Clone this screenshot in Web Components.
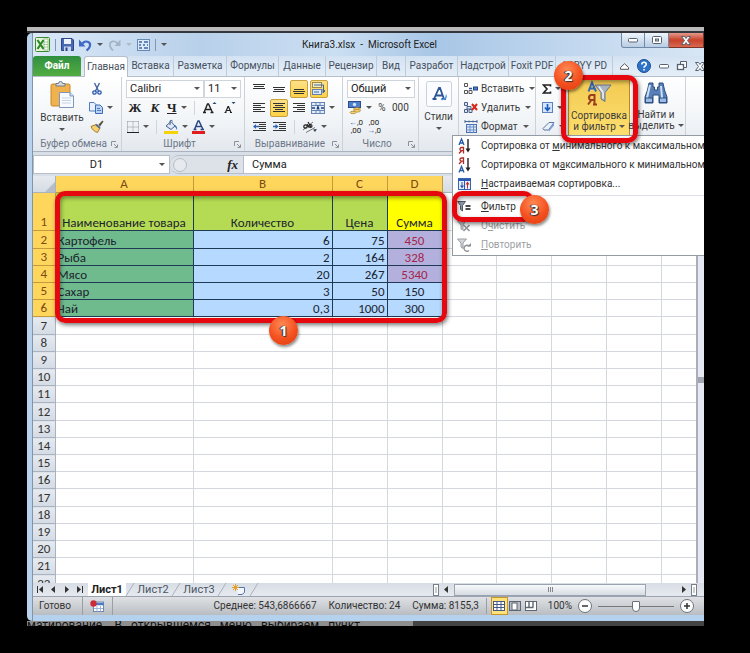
<!DOCTYPE html>
<html lang="ru">
<head>
<meta charset="utf-8">
<title>Книга3.xlsx - Microsoft Excel</title>
<style>
html,body{margin:0;height:100%;background:#000}
body{font-family:Roboto,"Open Sans",sans-serif;font-size:10px;line-height:14px;color:#3b3b3b}
</style>
</head>
<body>
<excel-page></excel-page>
<script>
const base = `:host,*{box-sizing:border-box}button,select,input{font:inherit;color:inherit;margin:0;padding:0;border:0;background:none;outline:0}button{cursor:pointer}svg{display:block;overflow:visible}`;
function define(name, css, html, setup){
  const t = document.createElement('template');
  customElements.define(name, class extends HTMLElement{
    constructor(){ super(); this.attachShadow({mode:'open'}); }
    connectedCallback(){
      if(this.shadowRoot.childNodes.length) return;
      t.innerHTML = `<style>${base}${css}</style>` + (typeof html==='function' ? html(this) : html);
      this.shadowRoot.append(t.content.cloneNode(true));
      if(setup) setup(this);
    }
  });
}

const lines = (rows, y0, step=2) => rows.map((r,i)=>`<path d="M${r[0]} ${y0+i*step}.5H${r[1]}" stroke="#333"/>`).join('');
const icons = {
 excel:[15,15,`<rect x=".5" y=".5" width="14" height="14" rx="1" fill="#e9f5dd" stroke="#3c8a2e"/><rect x="9" y="2" width="4" height="11" fill="#fff" stroke="#7bb46b" stroke-width=".7"/><path d="M9 5h4M9 7.500h4M9 10h4" stroke="#7bb46b" stroke-width=".7"/><path d="M2.500 3l6 9M8.500 3l-6 9" stroke="#2e8b2b" stroke-width="2.200"/>`],
 save:[13,13,`<path d="M.5.5h10.500l1.500 1.500v10.500H.5z" fill="#4a68b4" stroke="#2d4686"/><path d="M3 1h7v5H3z" fill="#eef3fb"/><path d="M3 8.500h7V13H3z" fill="#c9d6ee"/><path d="M4.500 9.500h2V13h-2z" fill="#2d4686"/>`],
 undo:[13,12,`<path d="M3.500 4.500C6 1 12 2.500 11 7 10.500 9 9 10.500 7.500 11.500" fill="none" stroke="#3e69c4" stroke-width="2.200"/><path d="M0 .5v7h6.500z" fill="#3e69c4"/>`],
 redo:[13,12,`<path d="M9.500 4.500C7.500 1 1 1.500 2 7c.4 2 2 3.500 3 4.500" fill="none" stroke="#a6b3c6" stroke-width="1.700"/><path d="M12.500 .5v6.500H6.500z" fill="#a6b3c6"/>`],
 gridq:[13,12,`<rect x=".5" y=".5" width="12" height="11" fill="#dbe9f9" stroke="#6988b4"/><path d="M2 3h3M7 3h4M2 6h2M6 6h2M10 6h1M2 9h3M7 9h4" stroke="#3d68a8" stroke-width="1.300"/>`],
 paste:[25,27,`<rect x="1" y="3" width="19" height="22" rx="1.500" fill="#efb24e" stroke="#c5872b"/><path d="M6 5V2.500h2.500a2 2 0 0 1 4 0H15V5z" fill="#d8dce2" stroke="#707a88"/><path d="M9.500 11.500H20l3.500 3.500v11.500h-14z" fill="#f6f9fd" stroke="#7f97bd"/><path d="M20 11.500V15h3.500" fill="#cddbf0" stroke="#7f97bd"/><path d="M12 17h9M12 19.500h9M12 22h9" stroke="#c7d4e7"/>`],
 cut:[10,12,`<path d="M2.500 0l4 8M7.500 0l-4 8" stroke="#41669f" stroke-width="1.400"/><circle cx="2.500" cy="9.500" r="1.700" fill="none" stroke="#2554b0" stroke-width="1.300"/><circle cx="7.500" cy="9.500" r="1.700" fill="none" stroke="#2554b0" stroke-width="1.300"/>`],
 copy:[14,12,`<path d="M.5.5h4.500l2 2v6.500H.5z" fill="#e8f0fb" stroke="#4f7ec4"/><path d="M6.500 3h4.500l2.500 2.500v6h-7z" fill="#bcd3f3" stroke="#3b6cb7"/><path d="M8 6.500h3M8 8.500h4" stroke="#4a79c0"/>`],
 brush:[14,13,`<path d="M8.500 4.500L12.500.5l1 1-3.500 5z" fill="#5a4b3b"/><path d="M1 6.500l5-2 4 3.500-2.500 4.500C5 12 2 9.500 1 6.500z" fill="#f5d071" stroke="#a67b25"/><path d="M6 4.500l4 3.500" stroke="#5b6c88" stroke-width="2"/>`],
 borders:[12,12,`<path d="M.5.5h11M.5 6h11M.5.5v11M6 .5v11M11.500.5v11" stroke="#8a939f" stroke-dasharray="1 1"/><path d="M0 11.500h12" stroke="#222"/>`],
 fill:[14,14,`<path d="M2 6l5-4.500 4 4.500-4 3.500z" fill="#dfe8f4" stroke="#41608f"/><path d="M6 5V1.500a1.200 1.200 0 0 1 2.400 0" fill="none" stroke="#41608f"/><path d="M11 5c2 1 2.500 3 2 5-1-1-1-3-2.500-3z" fill="#3c74c9"/><rect y="11" width="14" height="3" fill="#f5d20a"/>`],
 fcolor:[13,14,`<path d="M2.500 9.500L6 1h1l4 8.500M4.200 6.500h4.600M1.500 9.500h3M8.500 9.500h3.500" fill="none" stroke="#2a4a84" stroke-width="1.500"/><rect y="11" width="13" height="3" fill="#e21d1d"/>`],
 grow:[13,13,`<path d="M1 11.500L4.500 3h1L9.500 11.500M2.500 8.500h5M0 11.500h3M7.500 11.500h3" fill="none" stroke="#222" stroke-width="1.400"/><path d="M9.500 3l2-2 2 2z" fill="#27426f"/>`],
 shrink:[11,13,`<path d="M1.500 11.500L4 5.500h.5L7 11.500M2.500 9.500h3.500M.5 11.500h2M6 11.500h2" fill="none" stroke="#222" stroke-width="1.200"/><path d="M7.500 1l2 2 2-2z" fill="#27426f"/>`],
 atop:[12,12,lines([[0,12],[1,11],[0,12]],1)], amid:[12,12,lines([[0,12],[1,11],[0,12]],4)], abot:[12,12,lines([[1,11],[0,12],[1,11]],6)],
 aleft:[12,12,lines([[0,12],[0,8],[0,12],[0,8],[0,12]],1)], acen:[12,12,lines([[0,12],[2,10],[0,12],[2,10],[0,12]],1)], aright:[12,12,lines([[0,12],[4,12],[0,12],[4,12],[0,12]],1)],
 wrap:[14,14,`<rect x=".5" y=".5" width="9" height="5" fill="#f5edc0" stroke="#9a8a50"/><path d="M2 3h9.500v6" fill="none" stroke="#3d67a8"/><rect x=".5" y="7.500" width="9" height="5" fill="#dbe8fa" stroke="#6480b0"/><path d="M2 10h5M13 9l-2 2V7z" stroke="#3d67a8" fill="#3d67a8"/>`],
 merge:[14,12,`<rect x=".5" y=".5" width="13" height="11" fill="#e3edfa" stroke="#6583b3"/><path d="M5 .5v3M9 .5v3M5 8.500v3M9 8.500v3M.5 3.500h13M.5 8.500h13" stroke="#6583b3"/><path d="M1 6h3M10 6h3M6 7.500L7 4.500 8 7.500" fill="none" stroke="#1f3f7d" stroke-width="1.300"/>`],
 outd:[13,11,lines([[0,13],[6,13],[6,13],[6,13],[0,13]],1)+`<path d="M0 5.500l3-2.500v5z" fill="#2c62b8"/><path d="M2 5.500h4" stroke="#2c62b8" stroke-width="1.500"/>`],
 ind:[13,11,lines([[0,13],[6,13],[6,13],[6,13],[0,13]],1)+`<path d="M5.500 5.500l-3-2.500v5z" fill="#2c62b8"/><path d="M0 5.500h4" stroke="#2c62b8" stroke-width="1.500"/>`],
 orient:[15,12,`<path d="M1 9l10-8M4 11.500l9-5" stroke="#777"/><circle cx="3.500" cy="5.500" r="1.700" fill="none" stroke="#222" stroke-width="1.200"/><path d="M5 3l2 3.500M6 1l3 5" stroke="#222" stroke-width="1.200"/><circle cx="8.500" cy="5" r="1.500" fill="none" stroke="#222" stroke-width="1.200"/><path d="M11 8.500l4-.5-2 3z" fill="#345"/>`],
 money:[14,13,`<rect x=".5" y=".5" width="12" height="6" fill="#4e7fc8" stroke="#274d8f"/><circle cx="6.500" cy="3.500" r="1.700" fill="#d4e3f8"/><ellipse cx="9" cy="8" rx="3.500" ry="1.300" fill="#f7d574" stroke="#a8812b" stroke-width=".7"/><ellipse cx="9" cy="9.800" rx="3.500" ry="1.300" fill="#f7d574" stroke="#a8812b" stroke-width=".7"/><ellipse cx="5" cy="11.500" rx="3" ry="1.200" fill="#f7d574" stroke="#a8812b" stroke-width=".7"/>`],
 styles:[26,26,`<rect x=".5" y=".5" width="25" height="25" rx="2" fill="#fafcff" stroke="#c9d1dc"/><path d="M8 18l5-11h1l4 11M10 14.500h6.500M6.500 18h4M15.500 18h4.500" fill="none" stroke="#2c5595" stroke-width="1.800"/><path d="M14 19l5-2 1-4c2 3 1 7-6 6z" fill="#5599e0"/>`],
 insert:[14,12,`<path d="M.5.5h3v3h-3zM.5 7.500h3v3h-3zM5 7.500h3v3H5z" fill="#fff" stroke="#555"/><path d="M5 5.500h3" stroke="#2554a5" stroke-width="1.600"/><rect x="9.500" y="4" width="4" height="3" fill="#4b7bc9" stroke="#26488a"/>`],
 del:[14,12,`<path d="M.5.5h3v3h-3zM.5 7.500h3v3h-3zM5 7.500h3v3H5zM3 4.500h4v2.500H3z" fill="#dbe6f7" stroke="#4a5f85"/><path d="M8 2l5 6M13 2L8 8" stroke="#d9261c" stroke-width="2"/>`],
 format:[14,13,`<path d="M1 1.500h12M1 0v3M13 0v3M5 .5v2M9 .5v2" stroke="#4b6799"/><rect x="2.500" y="4.500" width="10" height="8" fill="#dbe7f9" stroke="#4b6fae"/><path d="M2.500 7h10M2.500 10h10M6 4.500v8M9.500 4.500v8" stroke="#6f91c9"/>`],
 fdown:[11,11,`<rect x=".5" y=".5" width="10" height="10" fill="#d6e5f9" stroke="#5b82bd"/><path d="M5.500 2v5M3 5.500l2.500 3 2.500-3" fill="none" stroke="#1c5cc0" stroke-width="1.700"/>`],
 erase:[13,11,`<path d="M1 7.500L7 1.500h5L6.500 9H2z" fill="#eaf1fa" stroke="#5d76a1"/><path d="M6.500 9l5.500-7.500v3L7 10.500" fill="#7ba1da"/>`],
 sort:[25,25,`<path d="M1.500 10.500L5 1.500l4 9M2.500 7.500h5" fill="none" stroke="#3365b4" stroke-width="2"/><path d="M7.500 23V14H4.500a2.500 2.500 0 0 0 0 5H7.500M4.500 19L1 23.500M6 23.500h4" fill="none" stroke="#9a3e1d" stroke-width="2"/><path d="M8 4h16l-6 7.500v9l-4-2.500v-6.500z" fill="#aab3c0" stroke="#69758a"/><path d="M12 5.500l4 6v6" fill="none" stroke="#eef2f7" stroke-width="1.500"/>`],
 find:[24,24,`<path d="M5 2h4v4h1.500v3h3V6H15V2h4l1.500 7L23 16v6h-8v-8H9v8H1v-6l2.500-7z" fill="#577fb8" stroke="#2f517f"/><path d="M6 4L3 17M17 5l1 12" stroke="#cfe0f6" stroke-width="2"/><rect x="1.500" y="17" width="7" height="4.500" fill="#9bbce8" stroke="#2f517f"/><rect x="15.500" y="17" width="7" height="4.500" fill="#9bbce8" stroke="#2f517f"/>`],
 sortaz:[13,16,`<path d="M1 7L3.500 1 6 7M1.500 5h4" fill="none" stroke="#2459a8" stroke-width="1.300"/><path d="M5.500 15.500V9.500h-2a1.500 1.500 0 0 0 0 3.200h2M3.500 12.700L1 15.500" fill="none" stroke="#b02c26" stroke-width="1.300"/><path d="M10 1v11" stroke="#222" stroke-width="1.400"/><path d="M7.500 10.500h5L10 14.500z" fill="#222"/>`],
 sortza:[13,16,`<path d="M5.500 7V1h-2a1.500 1.500 0 0 0 0 3.200h2M3.500 4.200L1 7" fill="none" stroke="#b02c26" stroke-width="1.300"/><path d="M1 15.500L3.500 9.500 6 15.500M1.500 13.500h4" fill="none" stroke="#2459a8" stroke-width="1.300"/><path d="M10 1v11" stroke="#222" stroke-width="1.400"/><path d="M7.500 10.500h5L10 14.500z" fill="#222"/>`],
 custom:[13,12,`<rect x=".5" y=".5" width="12" height="11" fill="#e6effc" stroke="#3866b2"/><path d="M.5 2h12" stroke="#2858b0" stroke-width="2"/><path d="M4 4v5M6.500 3v9" stroke="#2858b0"/><path d="M2 7.500h4L4 10.500z" fill="#2858b0"/><path d="M9.500 6v4.500" stroke="#c22c22"/><path d="M7.500 6.500h4l-2-3z" fill="#c22c22"/>`],
 filter:[14,11,`<path d="M.5.500h8L5.500 4.500V10l-2-1.500v-4z" fill="#8e99a8" stroke="#4d5866"/><path d="M8.500 5h5M8.500 8h5" stroke="#111" stroke-width="1.700"/>`],
 clear:[14,12,`<path d="M.5 1h8L6 5v5L4 9V5z" fill="#c4c7cb" stroke="#9b9fa5"/><path d="M6.500 5l6 6M12.500 5l-6 6" stroke="#8f9399" stroke-width="1.600"/>`],
 again:[14,14,`<path d="M.5 1h9L6 5v5.500l-2-1.500V5z" fill="#d3d6da" stroke="#9b9fa5"/><path d="M12.500 8.500A3 3 0 1 0 12 12.500" fill="none" stroke="#8f9399" stroke-width="1.400"/><path d="M10 8.500h4V5z" fill="#8f9399"/>`],
 macro:[14,12,`<rect x="3.500" y="2" width="10" height="9.500" fill="#fff" stroke="#6b88b5"/><path d="M3.500 4h10" stroke="#4b78c4" stroke-width="2.500"/><path d="M7 6v5.500M10.500 6v5.500M4 8.500h9" stroke="#9db4d6"/><circle cx="3.500" cy="3.500" r="3.200" fill="#cc2c35"/>`],
 newtab:[14,11,`<path d="M4.500 3.500h8v5l-2.500 2H6" fill="#f3f7fd" stroke="#5474ac"/><path d="M3.500 0v7M0 3.500h7M1 1l5 5M6 1L1 6" stroke="#e0a02b"/>`],
 slash:[8,13,`<path d="M0 13L8 0" stroke="#a9b1bc"/>`],
 vnormal:[12,10,`<rect x=".5" y=".5" width="11" height="9" fill="#fff" stroke="#445b86"/><path d="M.5 3.500h11M.5 6.500h11M4 .5v9M8 .5v9" stroke="#445b86"/>`],
 vlayout:[12,10,`<rect x=".5" y=".5" width="11" height="9" fill="#b9bec6" stroke="#5d6672"/><rect x="3" y="2" width="5" height="7" fill="#fff" stroke="#5d6672"/>`],
 vbreak:[12,10,`<rect x=".5" y=".5" width="11" height="9" fill="#fff" stroke="#5d6672"/><path d="M4 .5v6M8 .5v6M.5 6.500h8" stroke="#5d6672" stroke-width="1.400"/>`],
 help:[14,14,`<circle cx="7" cy="7" r="6.500" fill="#2d74c8" stroke="#1d4f96"/><path d="M4.800 5.500C4.800 2.500 9.500 2.700 9.300 5.300 9.200 6.800 7 7 7 8.800M7 10v1.600" fill="none" stroke="#fff" stroke-width="1.600"/>`],
 up:[9,7,`<path d="M.5 4.500L4.500.7l4 3.800v1.800h-8z" fill="#fff" stroke="#555"/>`],
 mini:[10,5,`<rect x=".5" y=".5" width="9" height="3.500" rx="1" fill="#fff" stroke="#566270"/>`],
 rest:[10,10,`<path d="M3.500 3V.5h6v6H7" fill="#fff" stroke="#566270"/><rect x=".5" y="3.500" width="6" height="5" fill="#fff" stroke="#566270" stroke-width="1.300"/>`],
 x:[10,9,`<path d="M.5.5h3L5 2.500 6.500.5h3L6.500 4.500l3 4h-3L5 6.500 3.500 8.500h-3L3.500 4.500z" fill="#fff" stroke="#566270"/>`],
 max:[10,8,`<rect x=".5" y=".5" width="9" height="7" rx="1" fill="#fff" stroke="#566270"/><rect x="3.500" y="3" width="3" height="2" fill="#b9c7d8" stroke="#566270"/>`],
 launch:[7,7,`<path d="M.5 5V.5H5M3 3l3 3M6.500 3.500v3h-3" fill="none" stroke="#8b929b"/>`],
 sigma:[9,10,`<path d="M8.500 2.500V1H1.500l3.500 4-3.500 4h7V7.500" fill="none" stroke="#222" stroke-width="1.600"/>`],
 first:[7,7,`<path d="M.5 0v7" stroke="#333"/><path d="M6 0v7L2 3.500z" fill="#333"/>`],
 prev:[7,7,`<path d="M5 0v7L1 3.500z" fill="#333"/>`],
 next:[7,7,`<path d="M2 0v7l4-3.500z" fill="#333"/>`],
 last:[7,7,`<path d="M6.500 0v7" stroke="#333"/><path d="M1 0v7l4-3.500z" fill="#333"/>`],
 split:[6,12,`<rect x=".5" y=".5" width="5" height="11" fill="#fff" stroke="#777f8a"/><path d="M3 3v6" stroke="#999"/>`],
 corner:[10,10,`<path d="M10 0v10H0z" fill="#b5bdc8"/>`],
 minus:[14,14,`<circle cx="7" cy="7" r="6.500" fill="#fdfdfd" stroke="#6e747c"/><path d="M4 7h6" stroke="#333" stroke-width="1.500"/>`],
 plus:[14,14,`<circle cx="7" cy="7" r="6.500" fill="#fdfdfd" stroke="#6e747c"/><path d="M4 7h6M7 4v6" stroke="#333" stroke-width="1.500"/>`]
};
define('ui-icon', `:host{display:inline-block;flex:none}`, el=>{
  const [w,h,b]=icons[el.getAttribute('name')];
  return `<svg width="${w}" height="${h}" viewBox="0 0 ${w} ${h}" aria-hidden="true">${b}</svg>`;
});
define('drop-arrow', `:host{display:inline-block;flex:none}i{display:block;border:3px solid transparent;border-top-color:#555;border-bottom:0;width:0;height:0}:host([soft]) i{border-top-color:#b3bac4}`, `<i></i>`);

/* Button of the ribbon: optional icon, slotted text, optional arrow */
define('tool-button', `:host{display:inline-flex;flex:none}
button{display:flex;align-items:center;gap:4px;height:18px;min-width:18px;justify-content:center;white-space:nowrap;border:1px solid transparent;border-radius:2px}
:host([on]) button{background:linear-gradient(#fbe08a,#fdd247);border-color:#c9a03a}
:host([text]) button{gap:3px}:host([text]) drop-arrow{margin-left:2px}`,
 el=>`<button aria-label="${el.getAttribute('label')||''}">${el.hasAttribute('icon')?`<ui-icon name="${el.getAttribute('icon')}"></ui-icon>`:''}<slot></slot>${el.hasAttribute('arrow')?'<drop-arrow></drop-arrow>':''}</button>`,
 el=>{ if(!el.hasAttribute('label')) el.shadowRoot.querySelector('button').removeAttribute('aria-label'); });

define('big-button', `:host{display:flex;flex:none}
button{display:flex;flex-direction:column;align-items:center;white-space:nowrap;line-height:11px;height:57px;width:100%;padding-top:1px;border:1px solid transparent;gap:4px}
span{display:block;text-align:center}drop-arrow{margin-left:3px;vertical-align:2px}
.below{margin:1px 0 0}
:host([on]) button{background:linear-gradient(#f2ca52,#fddf6e);border-color:#b48a2a}`,
 el=>`<button><ui-icon name="${el.getAttribute('icon')}"></ui-icon><span><slot></slot>${el.hasAttribute('inline')?'<drop-arrow></drop-arrow>':''}</span>${el.hasAttribute('inline')?'':'<drop-arrow class="below"></drop-arrow>'}</button>`);

define('ribbon-group', `:host{display:flex;flex-direction:column;flex:none;border-right:1px solid #cdd2d9;padding-top:2px}
.body{flex:1;display:flex;min-height:57px}
footer{display:flex;align-items:center;height:14px;color:#6c7787;padding:0 3px}
footer span{flex:1;text-align:center;white-space:nowrap}`,
 el=>`<div class="body"><slot></slot></div><footer><span>${el.getAttribute('label')||''}</span>${el.hasAttribute('launch')?'<ui-icon name="launch"></ui-icon>':''}</footer>`);

define('tool-rows', `:host{display:flex;flex-direction:column;flex:1;min-width:0}::slotted(div){display:flex;align-items:center;height:19px}`, `<slot></slot>`);

define('title-bar', `:host{display:flex;align-items:center;height:23px;color:#222;background:linear-gradient(90deg,#dbe9f8,#b8d0ea 25%,#cbdff2 45%,#a8c6e6 60%,#c7dbf0 85%,#d8e6f4)}
.quick{display:flex;align-items:center;gap:5px;padding-left:2px;flex:1}
.bar{width:1px;height:12px;background:#8397b0}
h1{margin:0;font-size:10px;font-weight:400;line-height:16px}
.win{flex:1;display:flex;justify-content:flex-end;align-self:flex-start}
.win button{height:15px;width:24px;display:grid;place-items:center;border:1px solid #7089a8;border-top:0;border-left-width:0;background:linear-gradient(#eef4fb,#b9cde4)}
.win button:first-child{border-left-width:1px;border-radius:0 0 0 3px}
.win .close{width:35px;background:linear-gradient(#e39a8b,#c9422c 50%,#d8684f);border-color:#7b352b}`,
`<div class="quick"><ui-icon name="excel"></ui-icon><i class="bar"></i><ui-icon name="save"></ui-icon><ui-icon name="undo"></ui-icon><drop-arrow></drop-arrow><ui-icon name="redo"></ui-icon><drop-arrow soft></drop-arrow><ui-icon name="gridq"></ui-icon><i class="bar"></i><drop-arrow></drop-arrow></div>
<h1>Книга3.xlsx&nbsp; -&nbsp; Microsoft Excel</h1>
<div class="win"><button aria-label="Свернуть"><ui-icon name="mini"></ui-icon></button><button aria-label="Развернуть"><ui-icon name="max"></ui-icon></button><button class="close" aria-label="Закрыть"><ui-icon name="x"></ui-icon></button></div>`);

define('ribbon-tabs', `:host{display:flex;height:21px;background:linear-gradient(#d3e2f2,#e6eff8);color:#46505e;border-bottom:1px solid #b5bfcc}
nav{display:grid;grid-template-columns:48px 47px 46px 53px 52px 47px 51px 29px 52px 51px 47px 57px;flex:none}
button{overflow:hidden;white-space:nowrap;border-right:1px solid #bfcbd9;padding:0}
button:first-child{background:linear-gradient(#2f8f3e,#53ad43);color:#fff;border-radius:3px 3px 0 0;font-weight:700;border:0}
button:nth-child(2){background:#fff;border:1px solid #b5bfcc;border-bottom:0;border-radius:3px 3px 0 0;margin:0 0 -1px 3px;padding:0}
.side{display:flex;align-items:center;gap:8px;padding-left:7px;overflow:hidden}`,
`<nav>${['Файл','Главная','Вставка','Разметка','Формулы','Данные','Рецензир','Вид','Разработ','Надстрой','Foxit PDF','ABBYY PD'].map(t=>`<button>${t}</button>`).join('')}</nav>
<div class="side">${['up','help','mini','rest','x'].map(n=>`<ui-icon name="${n}"></ui-icon>`).join('')}</div>`);

define('ribbon-bar', `:host{display:flex;height:75px;overflow:hidden;background:linear-gradient(#fff,#f1f4f7 60%,#e3e8ee);border-bottom:1px solid #a9b2bd}
.clip{width:89px}.font{width:123px}.align{width:98px}.num{width:76px}.sty{width:40px}.cells{width:77px}.edit{width:150px}
.paste{width:55px;padding-left:3px}
select{appearance:none;height:18px;border:1px solid #d0d5dc;background:#fff;padding:0 3px;min-width:0;color:#222;width:100%;font-size:11px}
.box{position:relative;display:flex;align-items:center}.box drop-arrow{margin-left:-10px}
b,i,u{font:700 13px "Liberation Serif",serif;color:#222}i{font-style:italic}
.font div,.align div{gap:2px}.sep{width:1px;height:14px;background:#d0d5dc;margin:0 4px}
.w74{width:78px}.w36{width:37px}.dec{font-size:8px;line-height:8px;color:#222}
.edit tool-rows{flex:none;width:32px}.srt{width:62px}.fnd{width:52px}`,
`<ribbon-group class="clip" label="Буфер обмена" launch><big-button class="paste" icon="paste">Вставить</big-button>
 <tool-rows><div><tool-button icon="cut" label="Вырезать"></tool-button></div><div><tool-button icon="copy" arrow label="Копировать"></tool-button></div><div><tool-button icon="brush" label="Формат по образцу"></tool-button></div></tool-rows></ribbon-group>
<ribbon-group class="font" label="Шрифт" launch><tool-rows style="padding-left:4px">
 <div style="gap:0"><span class="box w74"><select aria-label="Шрифт"><option>Calibri</option></select><drop-arrow></drop-arrow></span><span class="box w36"><select aria-label="Размер"><option>11</option></select><drop-arrow></drop-arrow></span></div>
 <div><tool-button><b>Ж</b></tool-button><tool-button><i>К</i></tool-button><tool-button arrow><u>Ч</u></tool-button><span class="sep"></span><tool-button icon="grow" label="Увеличить"></tool-button><tool-button icon="shrink" label="Уменьшить"></tool-button></div>
 <div><tool-button icon="borders" arrow label="Границы"></tool-button><span class="sep"></span><tool-button icon="fill" arrow label="Заливка"></tool-button><tool-button icon="fcolor" arrow label="Цвет текста"></tool-button></div></tool-rows></ribbon-group>
<ribbon-group class="align" label="Выравнивание" launch><tool-rows style="padding-left:5px">
 <div><tool-button icon="atop" label="По верху"></tool-button><tool-button icon="amid" label="По середине"></tool-button><tool-button on icon="abot" label="По низу"></tool-button><tool-button on icon="wrap" label="Перенос текста"></tool-button></div>
 <div><tool-button icon="aleft" label="Влево"></tool-button><tool-button on icon="acen" label="По центру"></tool-button><tool-button icon="aright" label="Вправо"></tool-button><tool-button icon="merge" arrow label="Объединить"></tool-button></div>
 <div><tool-button icon="outd" label="Уменьшить отступ"></tool-button><tool-button icon="ind" label="Увеличить отступ"></tool-button><span class="sep"></span><tool-button icon="orient" arrow label="Ориентация"></tool-button></div></tool-rows></ribbon-group>
<ribbon-group class="num" label="Число" launch><tool-rows style="padding-left:4px">
 <div><span class="box" style="width:68px"><select aria-label="Числовой формат"><option>Общий</option></select><drop-arrow></drop-arrow></span></div>
 <div><tool-button icon="money" arrow label="Денежный"></tool-button><tool-button>%</tool-button><tool-button>000</tool-button></div>
 <div><tool-button class="dec"><span><span style="color:#2c62b8">←</span>,0<br>,00</span></tool-button><tool-button class="dec"><span>,00<br><span style="color:#2c62b8">→</span>,0</span></tool-button></div></tool-rows></ribbon-group>
<ribbon-group class="sty"><big-button style="width:39px" icon="styles">Стили</big-button></ribbon-group>
<ribbon-group class="cells"><tool-rows style="padding-left:4px">
 <div><tool-button text icon="insert" arrow>Вставить</tool-button></div><div><tool-button text icon="del" arrow>Удалить</tool-button></div><div><tool-button text icon="format" arrow>Формат</tool-button></div></tool-rows></ribbon-group>
<ribbon-group class="edit"><tool-rows style="padding-left:5px">
 <div><tool-button icon="sigma" arrow label="Сумма"></tool-button></div><div><tool-button icon="fdown" arrow label="Заполнить"></tool-button></div><div><tool-button icon="erase" arrow label="Очистить"></tool-button></div></tool-rows>
 <big-button class="srt" on inline icon="sort">Сортировка<br>и фильтр</big-button><big-button class="fnd" inline icon="find">Найти и<br>выделить</big-button></ribbon-group>`);

define('formula-bar', `:host{display:flex;height:24px;padding:3px 0 2px;background:#d9dfe7;color:#222;font-size:11px}
.name{width:137px;display:flex;align-items:center;background:#fff;border:1px solid #b6bec9;padding-right:4px}
.name input{min-width:0;flex:1;text-align:center;width:100%}
.fx{width:73px;display:flex;align-items:center;justify-content:space-between;background:#dde2e9;border:1px solid #b6bec9;border-width:1px 0;padding:0 5px 0 3px;border-radius:9px 0 0 9px}
.fx i{font:italic 700 13px "Liberation Serif",serif}.knob{width:14px;height:14px;border-radius:50%;border:1px solid #b5bcc6;background:#e6eaef}
.val{flex:1;min-width:0;border:1px solid #b6bec9;background:#fff;padding:0 8px}`,
`<div class="name"><input aria-label="Имя" value="D1"><drop-arrow></drop-arrow></div><div class="fx"><span class="knob"></span><i>fx</i></div><input class="val" aria-label="Строка формул" value="Сумма">`);

define('sheet-grid', `:host{display:flex;flex:1;min-height:0;overflow:hidden;background:#fff}
.view{flex:1;min-width:0;overflow:hidden}
table{border-collapse:collapse;table-layout:fixed;width:684px;font:13px/15px Carlito,Lato,"Open Sans",sans-serif;color:#1c2430}
thead tr{height:16px}tr{height:17px}tr:nth-child(5n+2){height:18px}tr.h{height:38px}
td,th{padding:0 2px;border:1px solid #d4d8de;border-width:0 1px 1px 0;vertical-align:bottom;white-space:nowrap;overflow:hidden;font-weight:400;text-align:center;height:inherit}
th{padding:0;line-height:16px}
thead th,tbody th{background:linear-gradient(#e6eaf0,#d5dbe4);border-color:#a9b3c0;color:#333}
thead th.s,tbody th.s{background:#ffd65c;border-color:#c49a3a;color:#7a4b12}
.a{background:#70bb8e;text-align:left}.n{background:#b5d9ff;text-align:right}.c{background:#b5d9ff}.v{background:#b4b0dd;color:#a3244a}.g{background:#b4db53}.y{background:#ff0}
.a,.n,.c,.v,.g,.y{border-color:#1f3a56}
.corner ui-icon{float:right}
.scroll{width:8px;background:#e6e9f2;border-left:2px solid #a9aebb;display:flex;flex-direction:column;justify-content:center;align-items:center}
.scroll i{width:6px;height:6px;background:#a2a5ad}`,
()=>{
 const data=[['Наименование товара','Количество','Цена','Сумма'],['Картофель','6','75','450'],['Рыба','2','164','328'],['Мясо','20','267','5340'],['Сахар','3','50','150'],['Чай','0,3','1000','300']];
 let rows='';
 for(let r=1;r<=22;r++){
  const d=data[r-1];
  rows+=`<tr${r===1?' class="h"':''}><th scope="row"${d?' class="s"':''}>${r}</th>`;
  for(let c=0;c<9;c++){
   const cls=!d||c>3?'':r===1?(c===3?'y':'g'):c===0?'a':c<3?'n':r<5?'v':'c';
   rows+=`<td${cls?` class="${cls}"`:''}>${d&&c<4?d[c]:''}</td>`;
  }
  rows+='</tr>';
 }
 return `<div class="view"><table><colgroup><col style="width:22px"><col style="width:138px"><col style="width:139px"><col style="width:55px"><col style="width:55px"><col><col><col><col><col></colgroup>
 <thead><tr><th class="corner"><ui-icon name="corner"></ui-icon></th>${[...'ABCDEFGHI'].map((l,i)=>i<4?`<th scope="col" class="s">${l}</th>`:`<th scope="col" aria-label="${l}"></th>`).join('')}</tr></thead><tbody>${rows}</tbody></table></div><div class="scroll"><i></i></div>`;
});

define('sheet-tabs', `:host{display:flex;align-items:center;height:14px;flex:none;background:linear-gradient(#d8dde5,#e6eaf0);font-size:11px;color:#4c5563;border-bottom:1px solid #9aa3ae}
.nav{display:flex;gap:6px;padding:0 5px 0 4px;flex:none}
.tabs{display:flex;flex:1;height:13px}
.tabs button{width:38px;line-height:12px}
.tabs button:first-child{background:#fff;color:#222;font-weight:700}
.tabs .new{margin:1px 4px 0 6px}
.bar{display:flex;align-items:center;flex:none;gap:4px}
.thumb{width:192px;height:12px;border:1px solid #9aa4b1;background:linear-gradient(#f7f9fb,#d7dce3);display:grid;place-items:center}
.thumb i{width:5px;height:5px;background:repeating-linear-gradient(90deg,#888 0 1px,transparent 1px 2px)}
.end{width:26px}`,
`<div class="nav">${['first','prev','next','last'].map(n=>`<ui-icon name="${n}"></ui-icon>`).join('')}</div>
<div class="tabs"><button>Лист1</button><ui-icon name="slash"></ui-icon><button>Лист2</button><ui-icon name="slash"></ui-icon><button>Лист3</button><ui-icon name="slash"></ui-icon><ui-icon class="new" name="newtab"></ui-icon><ui-icon name="slash"></ui-icon></div>
<div class="bar"><ui-icon name="split"></ui-icon><ui-icon name="prev"></ui-icon><span class="thumb"><i></i></span><span class="end"></span><ui-icon name="next"></ui-icon><ui-icon name="split"></ui-icon><span style="width:3px"></span></div>`);

define('status-bar', `:host{display:flex;flex:none;align-items:center;height:18px;background:linear-gradient(#dfe1e4,#b9bdc2);color:#333;white-space:nowrap}
.l{display:flex;align-items:center;flex:1;padding-left:6px}
.l>i{width:1px;height:18px;background:#9a9ea5;margin:0 7px 0 11px}
.st{display:flex;gap:12px}.v{display:flex;align-items:center;gap:1px;border-left:1px solid #9a9ea5;padding-left:5px;margin:0 9px 0 7px}
.v button{width:15px;height:16px;display:grid;place-items:center}.v button:first-child{background:#ffe27a;outline:1px solid #c6962a}
.z{display:flex;align-items:center;gap:6px;padding-right:10px}
.z>button{display:grid}input{appearance:none;width:76px;height:14px;background:linear-gradient(#777,#777) center/100% 1px no-repeat}
input::-webkit-slider-thumb{appearance:none;width:8px;height:11px;background:#fff;border:1px solid #6a7078;border-radius:1px 1px 4px 4px}`,
`<div class="l"><span>Готово</span><i></i><ui-icon name="macro"></ui-icon><i style="margin-left:8px"></i></div>
<div class="st"><span>Среднее: 543,6866667</span><span>Количество: 24</span><span>Сумма: 8155,3</span></div>
<div class="v"><button aria-label="Обычный"><ui-icon name="vnormal"></ui-icon></button><button aria-label="Разметка страницы"><ui-icon name="vlayout"></ui-icon></button><button aria-label="Страничный"><ui-icon name="vbreak"></ui-icon></button></div>
<div class="z"><span>100%</span><button aria-label="Уменьшить"><ui-icon name="minus"></ui-icon></button><input type="range" aria-label="Масштаб" value="50"><button aria-label="Увеличить"><ui-icon name="plus"></ui-icon></button></div>`);

define('menu-item', `:host{display:block}button{display:flex;align-items:center;width:100%;height:19px;text-align:left;white-space:nowrap;color:#333}
span.i{width:22px;display:grid;place-items:center;flex:none;margin-right:6px}button:disabled{color:#9c9fa4}`,
 el=>`<button${el.hasAttribute('disabled')?' disabled':''}><span class="i"><ui-icon name="${el.getAttribute('icon')}"></ui-icon></span><span><slot></slot></span></button>`);
define('drop-menu', `:host{display:block;background:#fff;border:1px solid #959ba3;border-right:0;padding:0 0 1px;overflow:hidden}`, `<slot></slot>`);

define('red-ring', `:host{display:block;border:5px solid #e5090f;border-radius:10px;box-shadow:1px 2px 4px #0008,inset 1px 2px 4px #0006;pointer-events:none}`, ``);
define('step-badge', `:host{display:grid;place-items:center;width:29px;height:29px;border-radius:50%;background:radial-gradient(circle at 45% 30%,#ff8a55,#f4501f 55%,#d93a0d);box-shadow:1px 2px 3px #0007;color:#fff;font:700 14px/14px "Open Sans",sans-serif;text-shadow:0 0 1px #333,1px 1px 1px #333,-1px 0 1px #333}`, `<slot></slot>`);

define('excel-page', `:host{display:flex;flex-direction:column;height:100vh;padding:27px 46px 27px 27px;position:relative;overflow:hidden}
.top{height:6px;flex:none;background:linear-gradient(#b9b9b9 0 4px,#33373d 4px)}
.win{display:flex;flex-direction:column;flex:1;min-height:0;padding:0 0 6px 6px;background:linear-gradient(90deg,#b9d3ec 0 5px,#8294a8 5px 6px,#b4d2ee 6px);border-radius:5px 0 0 5px;overflow:hidden}
.under{height:5px;flex:none;overflow:hidden;background:linear-gradient(90deg,#8e8e8e 0 57%,#444 57%);color:#111}
.under p{margin:-3px 0 0;width:333px;font-size:12px;line-height:14px;text-align:justify;text-align-last:justify;white-space:nowrap}
.over{position:absolute}
drop-menu{left:452px;right:46px;top:135px}
hr{margin:2px 0 1px 28px;border:0;border-top:1px solid #dcdfe3}
.r1{left:55px;top:191px;width:392px;height:132px}.r2{left:561px;top:75px;width:77px;height:68px}.r3{left:452px;top:191px;width:82px;height:31px}
.b1{left:269px;top:316px}.b2{left:554px;top:61px}.b3{left:520px;top:195px}`,
`<div class="top"></div><main class="win"><title-bar></title-bar><ribbon-tabs></ribbon-tabs><ribbon-bar></ribbon-bar><formula-bar></formula-bar><sheet-grid></sheet-grid><sheet-tabs></sheet-tabs><status-bar></status-bar></main>
<div class="under"><p>матирование. В открывшемся меню выбираем пункт</p></div>
<drop-menu class="over"><menu-item icon="sortaz">Сортировка от <u>м</u>инимального к максимальному</menu-item><menu-item icon="sortza">Сортировка от м<u>а</u>ксимального к минимальному</menu-item><menu-item icon="custom"><u>Н</u>астраиваемая сортировка...</menu-item><hr><menu-item icon="filter"><u>Ф</u>ильтр</menu-item><menu-item icon="clear" disabled>О<u>ч</u>истить</menu-item><menu-item icon="again" disabled><u>П</u>овторить</menu-item></drop-menu>
<red-ring class="over r1"></red-ring><red-ring class="over r2"></red-ring><red-ring class="over r3"></red-ring>
<step-badge class="over b1">1</step-badge><step-badge class="over b2">2</step-badge><step-badge class="over b3">3</step-badge>`);
</script>
</body>
</html>
